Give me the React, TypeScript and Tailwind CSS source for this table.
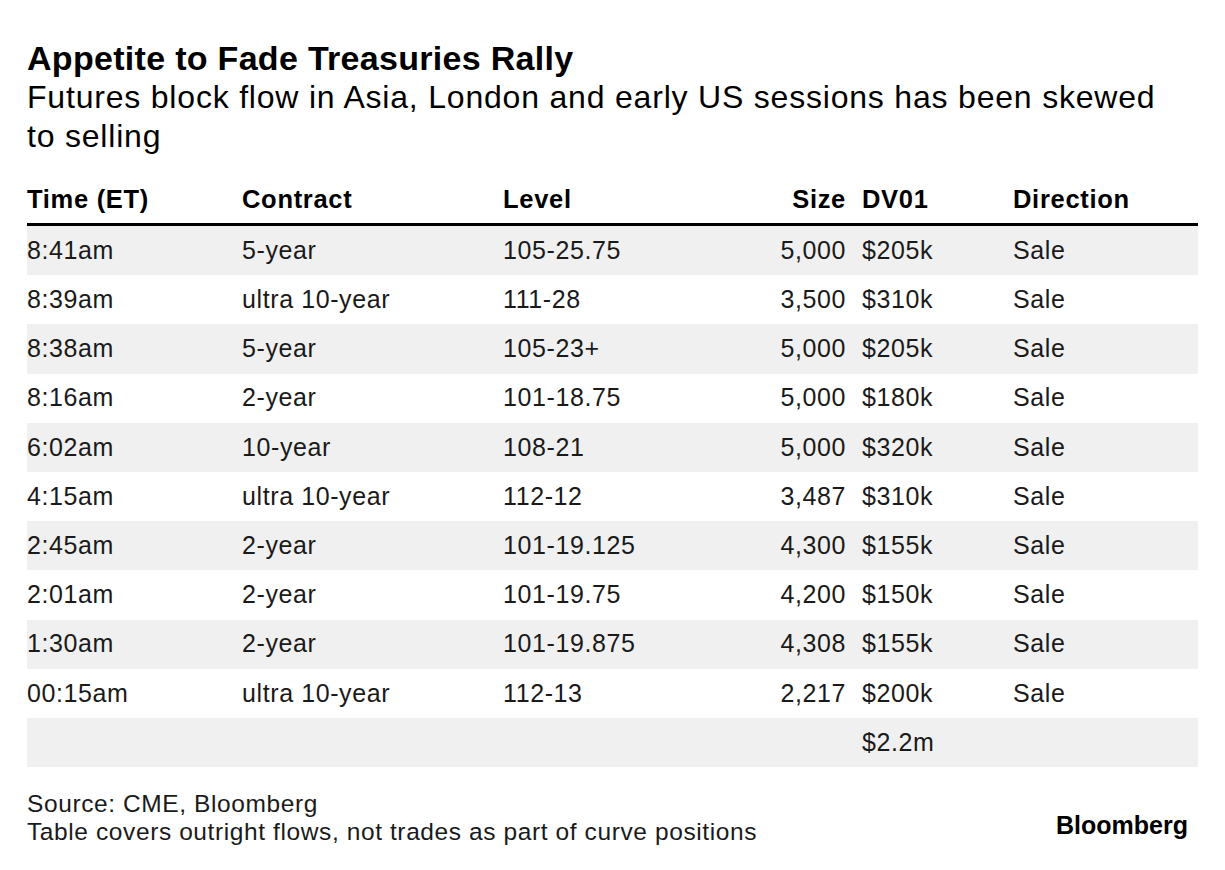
import React from 'react';

const rows = [
  ['8:41am', '5-year', '105-25.75', '5,000', '$205k', 'Sale'],
  ['8:39am', 'ultra 10-year', '111-28', '3,500', '$310k', 'Sale'],
  ['8:38am', '5-year', '105-23+', '5,000', '$205k', 'Sale'],
  ['8:16am', '2-year', '101-18.75', '5,000', '$180k', 'Sale'],
  ['6:02am', '10-year', '108-21', '5,000', '$320k', 'Sale'],
  ['4:15am', 'ultra 10-year', '112-12', '3,487', '$310k', 'Sale'],
  ['2:45am', '2-year', '101-19.125', '4,300', '$155k', 'Sale'],
  ['2:01am', '2-year', '101-19.75', '4,200', '$150k', 'Sale'],
  ['1:30am', '2-year', '101-19.875', '4,308', '$155k', 'Sale'],
  ['00:15am', 'ultra 10-year', '112-13', '2,217', '$200k', 'Sale'],
  ['', '', '', '', '$2.2m', ''],
];

const grid = 'grid grid-cols-[215px_261px_220px_123px_167px_1fr] items-center';

export default function App() {
  return (
    <div
      className="w-[1225px] h-[870px] bg-white text-[#1a1a1a] px-[27px] pt-[38px]"
      style={{ fontFamily: '"Liberation Sans", Arial, sans-serif' }}
    >
      {/* Heading */}
      <h1 className="text-[34px] leading-[40px] font-bold text-black tracking-[0.3px]">
        Appetite to Fade Treasuries Rally
      </h1>
      <p className="text-[32px] leading-[39px] text-black w-[1150px] tracking-[0.8px]">
        Futures block flow in Asia, London and early US sessions has been skewed to selling
      </p>

      {/* Table */}
      <div className="mt-[20px] w-[1171px]">
        <div className={`${grid} h-[50px] text-[25.5px] font-bold text-black border-b-[3px] border-black tracking-[0.7px]`}>
          <div>Time (ET)</div>
          <div>Contract</div>
          <div>Level</div>
          <div className="text-right">Size</div>
          <div className="pl-[16px]">DV01</div>
          <div>Direction</div>
        </div>
        {rows.map((r, i) => (
          <div
            key={i}
            className={`${grid} h-[49.2px] text-[25px] tracking-[0.6px] ${i % 2 === 0 ? 'bg-[#f0f0f0]' : 'bg-white'}`}
          >
            <div>{r[0]}</div>
            <div>{r[1]}</div>
            <div>{r[2]}</div>
            <div className="text-right">{r[3]}</div>
            <div className="pl-[16px]">{r[4]}</div>
            <div>{r[5]}</div>
          </div>
        ))}
      </div>

      {/* Footer */}
      <div className="mt-[23px] flex items-end justify-between w-[1161px]">
        <div className="text-[24.5px] leading-[28px] tracking-[0.6px]">
          <div>Source: CME, Bloomberg</div>
          <div>Table covers outright flows, not trades as part of curve positions</div>
        </div>
        <div className="text-[25px] font-bold text-black mb-[2px]">Bloomberg</div>
      </div>
    </div>
  );
}
